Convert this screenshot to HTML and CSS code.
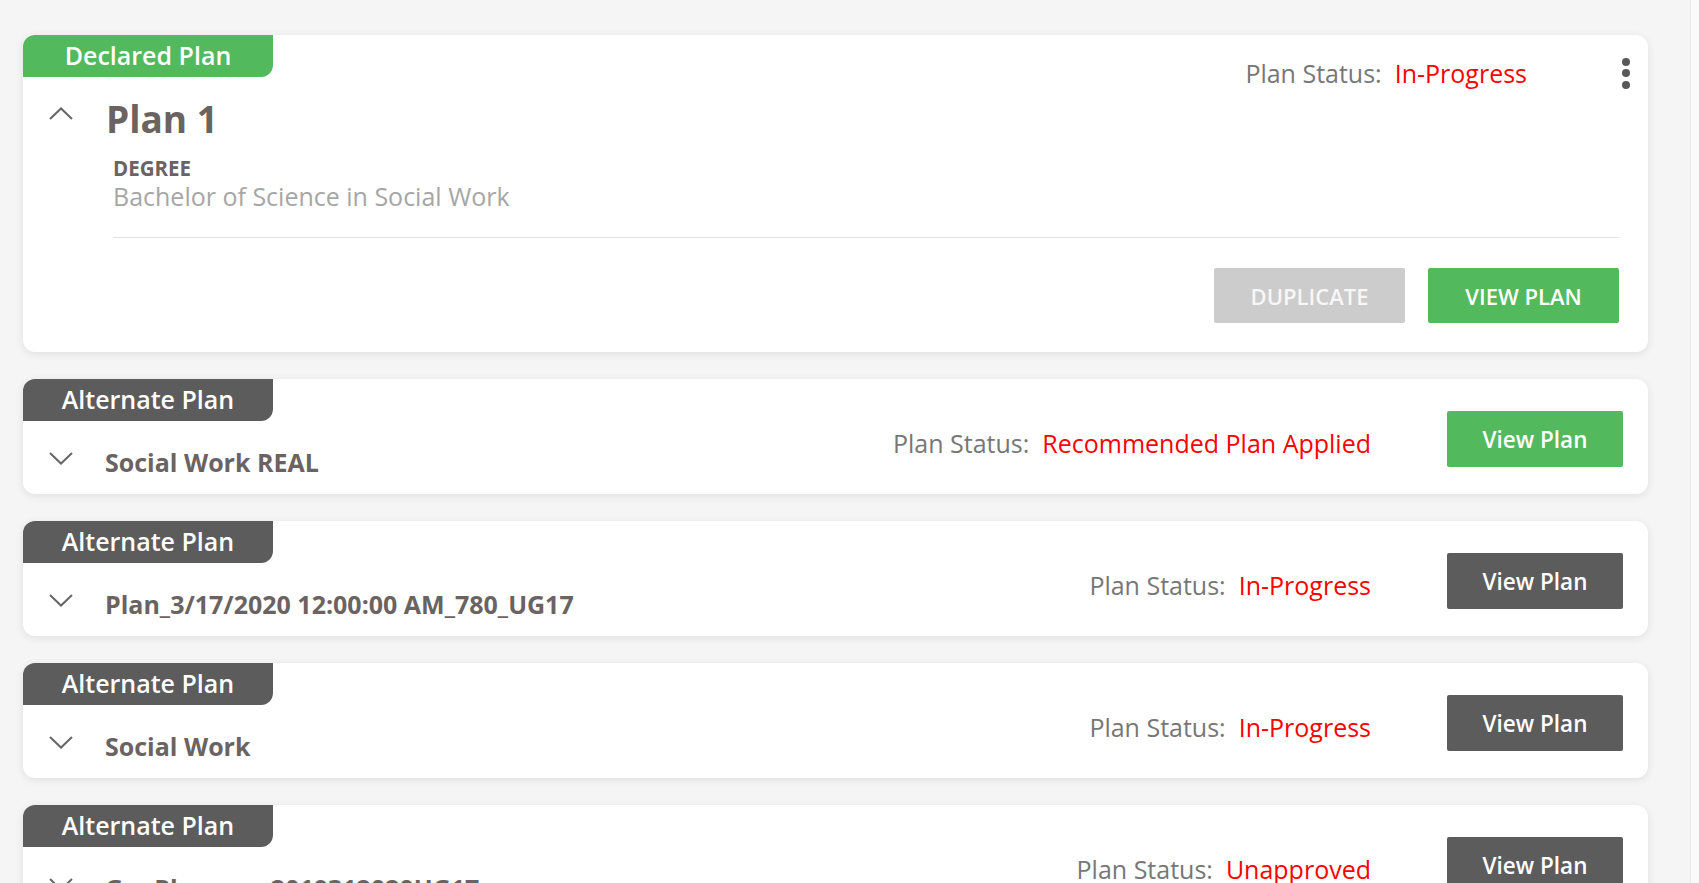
FILE: index.html
```html
<!DOCTYPE html>
<html lang="en">
<head>
<meta charset="utf-8">
<title>Plans</title>
<link rel="stylesheet" href="styles.css">
</head>
<body>
<div class="page">
  <main class="plans">
    <section class="card card-declared">
      <div class="card-top">
        <span class="tag tag-green">Declared Plan</span>
        <div class="top-right">
          <div class="status"><span class="status-label">Plan Status:</span><span class="status-value">In-Progress</span></div>
          <button class="kebab" aria-label="More"><span></span><span></span><span></span></button>
        </div>
      </div>
      <div class="title-row">
        <svg class="chev" width="24" height="13" viewBox="0 0 24 13"><polyline points="1,12 12,1.5 23,12" fill="none" stroke="#666" stroke-width="2"/></svg>
        <h2 class="plan-title">Plan 1</h2>
      </div>
      <div class="details">
        <div class="detail-label">DEGREE</div>
        <div class="detail-value">Bachelor of Science in Social Work</div>
        <div class="divider"></div>
        <div class="actions">
          <button class="btn btn-grey">DUPLICATE</button>
          <button class="btn btn-green">VIEW PLAN</button>
        </div>
      </div>
    </section>

    <section class="card card-alt">
      <div class="alt-left">
        <span class="tag tag-dark">Alternate Plan</span>
        <div class="title-row alt-title-row">
          <svg class="chev chev-down" width="24" height="13" viewBox="0 0 24 13"><polyline points="1,1 12,11.5 23,1" fill="none" stroke="#666" stroke-width="2"/></svg>
          <h3 class="alt-title">Social Work REAL</h3>
        </div>
      </div>
      <div class="alt-right">
        <div class="status"><span class="status-label">Plan Status:</span><span class="status-value">Recommended Plan Applied</span></div>
        <button class="btn btn-sm btn-green">View Plan</button>
      </div>
    </section>

    <section class="card card-alt">
      <div class="alt-left">
        <span class="tag tag-dark">Alternate Plan</span>
        <div class="title-row alt-title-row">
          <svg class="chev chev-down" width="24" height="13" viewBox="0 0 24 13"><polyline points="1,1 12,11.5 23,1" fill="none" stroke="#666" stroke-width="2"/></svg>
          <h3 class="alt-title">Plan_3/17/2020 12:00:00 AM_780_UG17</h3>
        </div>
      </div>
      <div class="alt-right">
        <div class="status"><span class="status-label">Plan Status:</span><span class="status-value">In-Progress</span></div>
        <button class="btn btn-sm btn-dark">View Plan</button>
      </div>
    </section>

    <section class="card card-alt">
      <div class="alt-left">
        <span class="tag tag-dark">Alternate Plan</span>
        <div class="title-row alt-title-row">
          <svg class="chev chev-down" width="24" height="13" viewBox="0 0 24 13"><polyline points="1,1 12,11.5 23,1" fill="none" stroke="#666" stroke-width="2"/></svg>
          <h3 class="alt-title">Social Work</h3>
        </div>
      </div>
      <div class="alt-right">
        <div class="status"><span class="status-label">Plan Status:</span><span class="status-value">In-Progress</span></div>
        <button class="btn btn-sm btn-dark">View Plan</button>
      </div>
    </section>

    <section class="card card-alt">
      <div class="alt-left">
        <span class="tag tag-dark">Alternate Plan</span>
        <div class="title-row alt-title-row">
          <svg class="chev chev-down" width="24" height="13" viewBox="0 0 24 13"><polyline points="1,1 12,11.5 23,1" fill="none" stroke="#666" stroke-width="2"/></svg>
          <h3 class="alt-title">GenPlan______2019312020UG17</h3>
        </div>
      </div>
      <div class="alt-right">
        <div class="status"><span class="status-label">Plan Status:</span><span class="status-value">Unapproved</span></div>
        <button class="btn btn-sm btn-dark">View Plan</button>
      </div>
    </section>
  </main>
  <div class="scroll-track"></div>
</div>
</body>
</html>
```

FILE: styles.css
```css
* { box-sizing: border-box; }

html, body {
  margin: 0;
  padding: 0;
  height: 100%;
  overflow: hidden;
}

body {
  font-family: "Open Sans", "Liberation Sans", sans-serif;
  background: #f5f5f5;
  color: #6d6464;
}

.page {
  display: flex;
  height: 883px;
  overflow: hidden;
}

.plans {
  flex: 1;
  padding: 35px 42px 0 23px;
  display: flex;
  flex-direction: column;
  gap: 27px;
}

.scroll-track {
  width: 9px;
  flex: none;
  background: #fafafa;
  border-left: 1px solid #ececec;
}

.card {
  background: #fff;
  border-radius: 12px;
  box-shadow: 0 2px 8px rgba(0, 0, 0, 0.09);
  flex: none;
}

.tag {
  display: inline-flex;
  align-items: center;
  justify-content: center;
  width: 250px;
  height: 42px;
  font-size: 25px;
  font-weight: 600;
  color: #fff;
  border-radius: 12px 0 12px 0;
  line-height: 1;
  padding-bottom: 2px;
}

.tag-green { background: #52b95d; }
.tag-dark { background: #5c5c5c; }

/* Declared card */
.card-declared {
  padding-bottom: 29px;
}

.card-top {
  display: flex;
  justify-content: space-between;
  align-items: flex-start;
}

.top-right {
  display: flex;
  align-items: center;
  height: 32px;
  margin-top: 22px;
  padding-right: 18px;
}

.status {
  font-size: 25px;
  line-height: 32px;
  white-space: nowrap;
  display: flex;
  gap: 13px;
}

.status-label { color: #777; }
.status-value { color: #ff0000; }

.kebab {
  margin-left: 95px;
  width: 8px;
  padding: 0;
  border: 0;
  background: none;
  display: flex;
  flex-direction: column;
  gap: 3.5px;
}

.kebab span {
  display: block;
  width: 8px;
  height: 8px;
  border-radius: 50%;
  background: #585858;
}

.title-row {
  display: flex;
  align-items: flex-start;
  padding-left: 26px;
  margin-top: 6px;
}

.chev {
  flex: none;
  margin-top: 12px;
}

.plan-title {
  margin: 0 0 0 33px;
  font-size: 37px;
  font-weight: 700;
  line-height: 48px;
  color: #6b6262;
}

.details {
  margin: 12px 29px 0 90px;
}

.detail-label {
  font-size: 20.5px;
  font-weight: 700;
  line-height: 26px;
  color: #6b6262;
}

.detail-value {
  font-size: 25px;
  font-weight: 400;
  line-height: 30px;
  color: #a6a6a6;
}

.divider {
  height: 1px;
  background: #e2e2e2;
  margin-top: 26px;
}

.actions {
  display: flex;
  justify-content: flex-end;
  gap: 23px;
  margin-top: 30px;
}

.btn {
  font-family: inherit;
  border: 0;
  border-radius: 2px;
  width: 191px;
  height: 55px;
  font-size: 22px;
  font-weight: 600;
  color: #fff;
  padding: 0;
  cursor: pointer;
}

.btn-grey { background: #cccccc; color: #f7f7f7; }
.btn-green { background: #52b95d; }
.btn-dark { background: #5c5c5c; }

.btn-sm {
  width: 176px;
  height: 56px;
  font-size: 22.5px;
}

/* Alternate cards */
.card-alt {
  display: flex;
  align-items: center;
  justify-content: space-between;
  padding-right: 25px;
}

.alt-left {
  display: flex;
  flex-direction: column;
  align-items: flex-start;
  padding-bottom: 16px;
}

.alt-title-row {
  margin-top: 25px;
}

.chev-down {
  margin-top: 6px;
}

.alt-title {
  margin: 0 0 0 32px;
  font-size: 25px;
  font-weight: 700;
  line-height: 32px;
  color: #6b6262;
  white-space: nowrap;
}

.alt-right {
  display: flex;
  align-items: center;
  padding-top: 5px;
}

.alt-right .status {
  margin-right: 76px;
  margin-top: 7px;
}
```
